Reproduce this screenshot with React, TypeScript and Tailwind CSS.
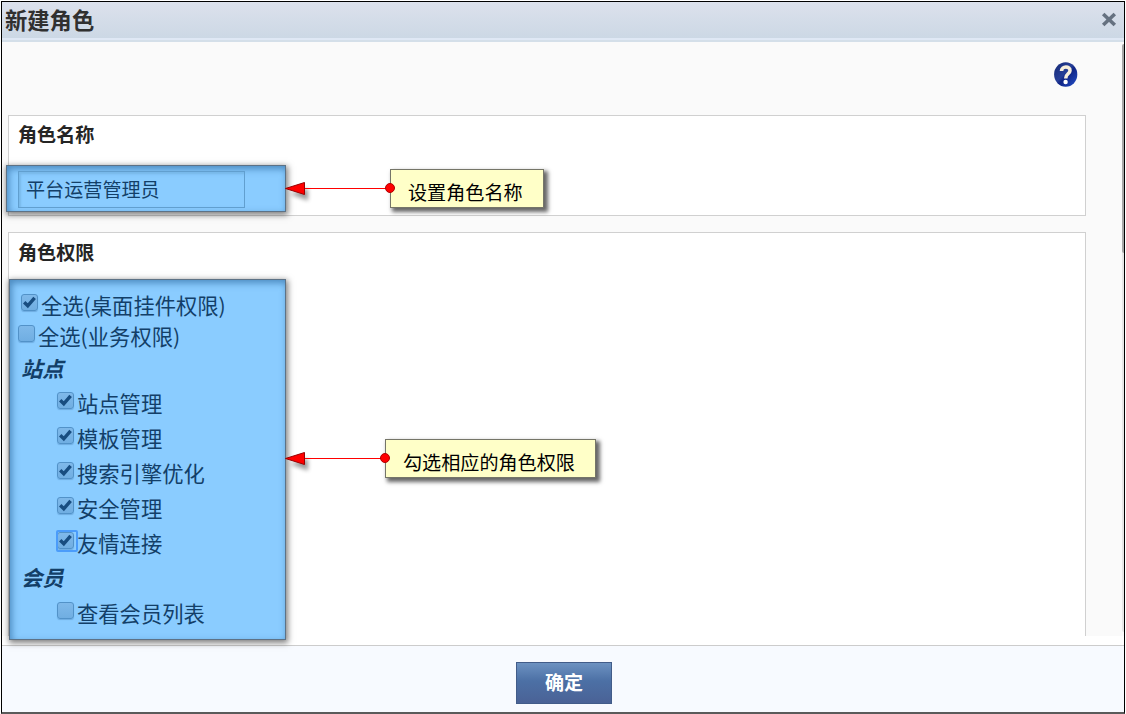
import { ReactNode } from "react";

function Check({ checked, focused }: { checked?: boolean; focused?: boolean }) {
  return (
    <span className="relative flex h-[17px] w-[17px] shrink-0 items-center justify-center rounded-[3px] border border-[#5292c8] bg-linear-to-b from-[#7fb9ea] to-[#70aee2] shadow-[0_1px_1px_#6dabe0]">
      {checked && (
        <svg width="13" height="13" viewBox="0 0 13 13" fill="none" className="shrink-0">
          <path d="M1.2 6.2 L4.8 9.8 L11.6 1.8" stroke="#184d80" strokeWidth="3.4" />
        </svg>
      )}
      {focused && (
        <span className="absolute -top-[3px] -left-[2px] h-[22px] w-[22px] rounded-[2px] border-2 border-[#4b9cfa]" />
      )}
    </span>
  );
}

type RowProps = { label: string; checked?: boolean; focused?: boolean; className: string };

function Row({ label, checked, focused, className }: RowProps) {
  return (
    <label className={"flex items-center whitespace-nowrap " + className}>
      <span className="-mt-[7px]">
        <Check checked={checked} focused={focused} />
      </span>
      <span className="-mt-[2px] text-[21.3px] leading-none">{label}</span>
    </label>
  );
}

function Group({ children, className }: { children: ReactNode; className: string }) {
  return (
    <div className={"flex items-center pb-[3px] pl-[11px] text-[21.3px] leading-none font-bold italic " + className}>
      {children}
    </div>
  );
}

function Callout({ length, children, className }: { length: number; children: ReactNode; className: string }) {
  return (
    <div className={"absolute left-full flex items-center " + className}>
      <svg
        width={length}
        height="22"
        viewBox={`0 0 ${length} 22`}
        className="z-10 shrink-0 overflow-visible"
      >
        <path d="M2 13 L20 7.5 V19.5 Z" fill="#000" opacity="0.4" style={{ filter: "blur(2px)" }} transform="translate(3 3)" />
        <path d={`M19 10.5 H${length}`} stroke="#f00" strokeWidth="1" />
        <path d="M0.5 10.5 L19.5 4.5 V16.5 Z" fill="#f00" stroke="#900" strokeWidth="1" />
        <circle cx={length} cy="10" r="4.5" fill="#f00" stroke="#b00000" strokeWidth="1" />
      </svg>
      <div className="mb-px h-[39px] border border-[#757568] bg-[#ffffc8] pt-[13px] pr-[20px] pl-[17px] text-[19.1px] leading-[19px] whitespace-nowrap text-black shadow-[3px_3px_4px_1px_rgba(0,0,0,0.6)]">
        {children}
      </div>
    </div>
  );
}

const highlight =
  "relative border border-[#5d7286] bg-[#8accff] text-[#133f68] shadow-[1px_2px_6px_1px_rgba(0,0,0,0.5),inset_2px_3px_7px_rgba(35,95,150,0.6)]";

export default function App() {
  return (
    <div className="h-[714px] w-[1126px] bg-white p-px font-['Noto_Sans_CJK_SC',sans-serif]">
      <div className="flex h-[713px] w-[1124px] flex-col border border-b-2 border-black border-b-[#5a5a5a]">
        <header className="flex h-9 shrink-0 items-center justify-between bg-linear-to-b from-[#dce1ec] to-[#ccd8e5] pr-[7px] pl-[3px]">
          <h1 className="-mt-[2px] text-[22.3px] leading-none font-bold text-[#303030]">新建角色</h1>
          <svg width="16" height="15" viewBox="0 0 16 15" className="-mt-[1px]">
            <path d="M2.2 2 L13.8 13 M13.8 2 L2.2 13" stroke="#657180" strokeWidth="3.6" />
          </svg>
        </header>
        <div className="h-1 shrink-0 border-b-2 border-[#d4dfe9] bg-[#dfe8f5]" />
        <main className="flex h-[594px] shrink-0 justify-between bg-[#fafafa]">
          <div className="flex w-[1084px] flex-col pl-[6px]">
            <div className="flex h-[73px] shrink-0 justify-end pt-[20px] pr-[8px]">
              <svg width="24" height="26" viewBox="0 0 24 26">
                <defs>
                  <linearGradient id="ball" x1="0" y1="0" x2="1" y2="1">
                    <stop offset="0" stopColor="#142873" />
                    <stop offset="0.45" stopColor="#263f98" />
                    <stop offset="0.55" stopColor="#102585" />
                    <stop offset="1" stopColor="#2450cc" />
                  </linearGradient>
                </defs>
                <ellipse cx="11.7" cy="12.5" rx="11.6" ry="12.2" fill="url(#ball)" />
                <path d="M7.5 9 C7.4 3.8 16.3 3.8 16 8.6 C15.8 12 11.7 11.7 11.7 16.4" fill="none" stroke="#f7efdc" strokeWidth="3.6" />
                <circle cx="11.6" cy="20" r="2.2" fill="#fff" />
              </svg>
            </div>
            <section className="h-[101px] shrink-0 border border-[#d0d0d0] bg-white">
              <h2 className="pt-[9px] pb-px pl-[9px] text-[19.1px] leading-[19px] font-bold text-[#252525]">角色名称</h2>
              <div className={highlight + " mt-[20px] -ml-[3px] h-[47px] w-[280px] pt-[5px] pl-[11px]"}>
                <div className="flex h-[37px] w-[227px] items-center border border-[#619fcf] pl-[7px] text-[19.1px] leading-none shadow-[inset_2px_2px_2px_#79b9ea]">
                  平台运营管理员
                </div>
                <Callout length={105} className="top-[3px]">设置角色名称</Callout>
              </div>
            </section>
            <section className="mt-4 h-[404px] shrink-0 border border-b-0 border-[#d0d0d0] bg-white">
              <h2 className="pt-[10px] pb-px pl-[9px] text-[19.1px] leading-[19px] font-bold text-[#252525]">角色权限</h2>
              <div className={highlight + " mt-[16px] h-[361px] w-[277px] pt-[10px]"}>
                <Row label="全选(桌面挂件权限)" checked className="h-[31px] gap-[3px] pl-[11px]" />
                <Row label="全选(业务权限)" className="h-8 gap-[3px] pl-[8px]" />
                <Group className="h-[33px]">站点</Group>
                <Row label="站点管理" checked className="h-[35px] gap-[3px] pl-[47px]" />
                <Row label="模板管理" checked className="h-[35px] gap-[3px] pl-[47px]" />
                <Row label="搜索引擎优化" checked className="h-[35px] gap-[3px] pl-[47px]" />
                <Row label="安全管理" checked className="h-[35px] gap-[3px] pl-[47px]" />
                <Row label="友情连接" checked focused className="h-[35px] gap-[3px] pl-[47px]" />
                <Group className="h-[35px]">会员</Group>
                <Row label="查看会员列表" className="h-[35px] gap-[3px] pl-[47px]" />
                <Callout length={100} className="top-[159px]">勾选相应的角色权限</Callout>
              </div>
            </section>
          </div>
          <div className="mt-[2px] h-[588px] w-[2px] rounded-l bg-[#e6e6e6]">
            <div className="h-[209px] rounded-l bg-[#a6a6a6]" />
          </div>
        </main>
        <div className="h-[9px] shrink-0 bg-white" />
        <footer className="flex flex-1 justify-center border-t border-[#cccccc] bg-[#f7faff] pt-4 pl-[2px]">
          <button className="h-[42px] w-24 border border-[#425c89] bg-linear-to-b from-[#6d92c1] via-[#4c70a5] via-45% to-[#4a6296] text-[19.1px] leading-none font-bold text-white">
            确定
          </button>
        </footer>
      </div>
    </div>
  );
}
